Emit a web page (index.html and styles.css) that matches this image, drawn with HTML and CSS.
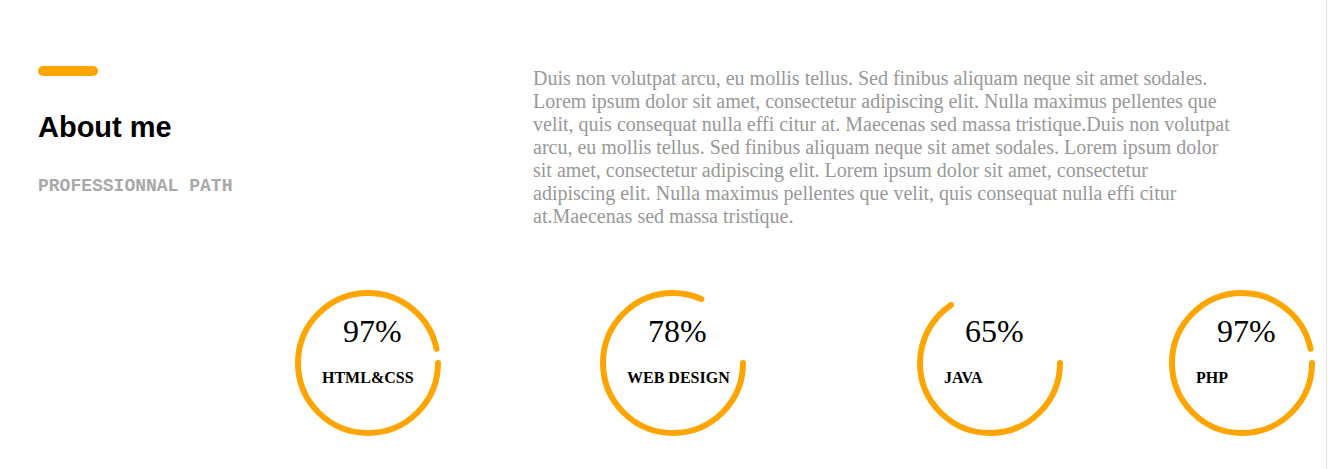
FILE: index.html
```html
<!DOCTYPE html>
<html lang="en">
<head>
<meta charset="utf-8">
<title>About me</title>
<link rel="stylesheet" href="styles.css">
</head>
<body>
<div class="page">
  <section class="about">
    <div class="about-head">
      <div class="accent-bar"></div>
      <h2 class="title">About me</h2>
      <p class="subtitle">PROFESSIONNAL PATH</p>
    </div>
    <p class="about-text">Duis non volutpat arcu, eu mollis tellus. Sed finibus aliquam neque sit amet sodales. Lorem ipsum dolor sit amet, consectetur adipiscing elit. Nulla maximus pellentes que velit, quis consequat nulla effi citur at. Maecenas sed massa tristique.Duis non volutpat arcu, eu mollis tellus. Sed finibus aliquam neque sit amet sodales. Lorem ipsum dolor sit amet, consectetur adipiscing elit. Lorem ipsum dolor sit amet, consectetur adipiscing elit. Nulla maximus pellentes que velit, quis consequat nulla effi citur at.Maecenas sed massa tristique.</p>
  </section>

  <section class="skills">
    <div class="skill">
      <svg class="ring" viewBox="0 0 146 146"><circle cx="73" cy="73" r="70" style="stroke-dasharray: 424.8 500"/></svg>
      <div class="percent">97%</div>
      <div class="label">HTML&amp;CSS</div>
    </div>
    <div class="skill">
      <svg class="ring" viewBox="0 0 146 146"><circle cx="73" cy="73" r="70" style="stroke-dasharray: 358.5 500"/></svg>
      <div class="percent">78%</div>
      <div class="label">WEB DESIGN</div>
    </div>
    <div class="skill">
      <svg class="ring" viewBox="0 0 146 146"><circle cx="73" cy="73" r="70" style="stroke-dasharray: 288 500"/></svg>
      <div class="percent">65%</div>
      <div class="label">JAVA</div>
    </div>
    <div class="skill">
      <svg class="ring" viewBox="0 0 146 146"><circle cx="73" cy="73" r="70" style="stroke-dasharray: 424.8 500"/></svg>
      <div class="percent">97%</div>
      <div class="label">PHP</div>
    </div>
  </section>
</div>
</body>
</html>
```

FILE: styles.css
```css
html, body {
  margin: 0;
  padding: 0;
  background: #ffffff;
}

.page {
  width: 1327px;
  height: 469px;
  border-right: 1px solid #e6e6e6;
  box-sizing: border-box;
  overflow: hidden;
}

.about {
  display: flex;
  padding: 67px 0 0 38px;
}

.about-head {
  width: 495px;
  flex: none;
  margin-top: -1px;
}

.accent-bar {
  width: 60px;
  height: 10px;
  border-radius: 5px;
  background: #ffa500;
}

.title {
  margin: 34px 0 0;
  font-family: "Liberation Sans", Arial, sans-serif;
  font-weight: bold;
  font-size: 29px;
  line-height: 34px;
  color: #000;
}

.subtitle {
  margin: 32px 0 0;
  font-family: "Liberation Mono", "Courier New", monospace;
  font-weight: bold;
  font-size: 18px;
  line-height: 20px;
  color: #a9a9a9;
}

.about-text {
  width: 699px;
  margin: 0;
  font-family: "Liberation Serif", "Times New Roman", serif;
  font-size: 20px;
  line-height: 23px;
  color: #999999;
}

.skills {
  display: grid;
  grid-template-columns: 305px 317px 252px 146px;
  margin: 62px 0 0 295px;
}

.skill {
  position: relative;
  width: 146px;
  height: 146px;
  box-sizing: border-box;
  padding-top: 23px;
  font-family: "Liberation Serif", "Times New Roman", serif;
  color: #000;
}

.ring {
  position: absolute;
  left: 0;
  top: 0;
  width: 146px;
  height: 146px;
}

.ring circle {
  fill: none;
  stroke: #ffa500;
  stroke-width: 6;
  stroke-linecap: round;
}

.percent {
  position: relative;
  padding-left: 48px;
  font-size: 32px;
  line-height: 36px;
}

.label {
  position: relative;
  margin-top: 20px;
  padding-left: 27px;
  font-size: 16px;
  font-weight: bold;
  line-height: 18px;
  white-space: nowrap;
}
```
